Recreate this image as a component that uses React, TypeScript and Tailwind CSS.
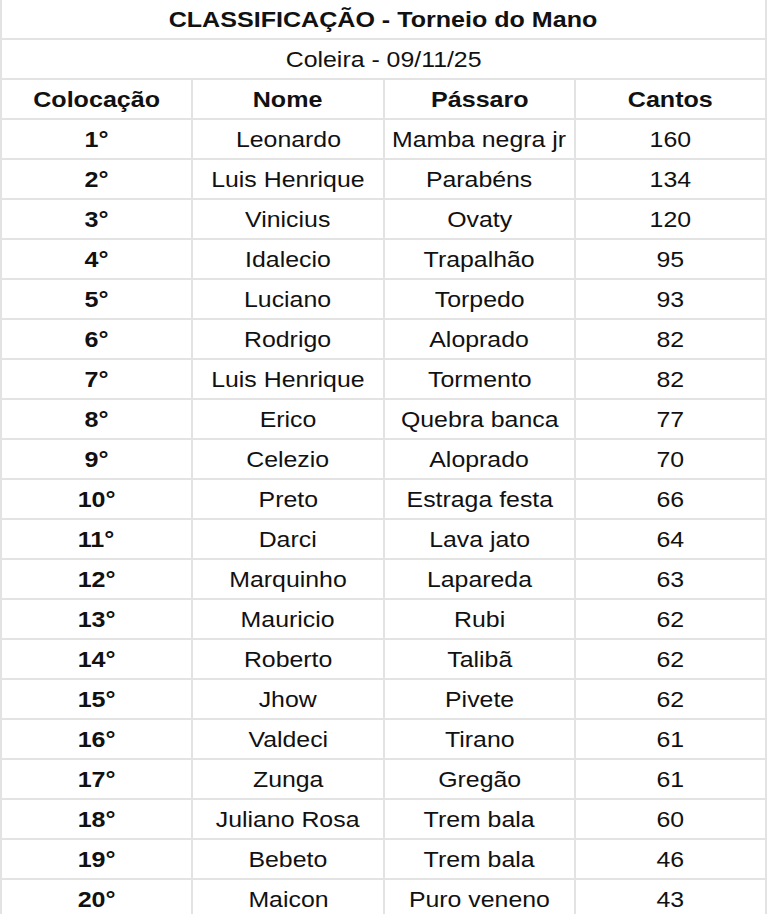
const ROWS = [
  ["1°", "Leonardo", "Mamba negra jr", "160"],
  ["2°", "Luis Henrique", "Parabéns", "134"],
  ["3°", "Vinicius", "Ovaty", "120"],
  ["4°", "Idalecio", "Trapalhão", "95"],
  ["5°", "Luciano", "Torpedo", "93"],
  ["6°", "Rodrigo", "Aloprado", "82"],
  ["7°", "Luis Henrique", "Tormento", "82"],
  ["8°", "Erico", "Quebra banca", "77"],
  ["9°", "Celezio", "Aloprado", "70"],
  ["10°", "Preto", "Estraga festa", "66"],
  ["11°", "Darci", "Lava jato", "64"],
  ["12°", "Marquinho", "Lapareda", "63"],
  ["13°", "Mauricio", "Rubi", "62"],
  ["14°", "Roberto", "Talibã", "62"],
  ["15°", "Jhow", "Pivete", "62"],
  ["16°", "Valdeci", "Tirano", "61"],
  ["17°", "Zunga", "Gregão", "61"],
  ["18°", "Juliano Rosa", "Trem bala", "60"],
  ["19°", "Bebeto", "Trem bala", "46"],
  ["20°", "Maicon", "Puro veneno", "43"],
];

function Cell({ children, bold }: { children: React.ReactNode; bold?: boolean }) {
  return (
    <div
      className={
        "h-10 flex items-center justify-center pt-px border-b-2 border-r-2 border-[#e3e3e3] whitespace-nowrap overflow-hidden" +
        (bold ? " font-bold" : "")
      }
    >
      <span className={bold ? "inline-block scale-x-[1.14]" : "inline-block scale-x-[1.13]"}>{children}</span>
    </div>
  );
}

export default function App() {
  return (
    <div className="w-[768px] bg-white text-[22px] leading-none text-[#111] font-['Liberation_Sans',Arial,sans-serif]">
      <div className="w-[767px] border-l-2 border-[#e3e3e3]">
        <Cell bold>CLASSIFICAÇÃO - Torneio do Mano</Cell>
        <Cell>Coleira - 09/11/25</Cell>
        <div className="grid grid-cols-[191px_192px_191px_191px]">
          <Cell bold>Colocação</Cell>
          <Cell bold>Nome</Cell>
          <Cell bold>Pássaro</Cell>
          <Cell bold>Cantos</Cell>
          {ROWS.map((r) => (
            <div key={r[0]} className="contents">
              <Cell bold>{r[0]}</Cell>
              <Cell>{r[1]}</Cell>
              <Cell>{r[2]}</Cell>
              <Cell>{r[3]}</Cell>
            </div>
          ))}
        </div>
      </div>
    </div>
  );
}
